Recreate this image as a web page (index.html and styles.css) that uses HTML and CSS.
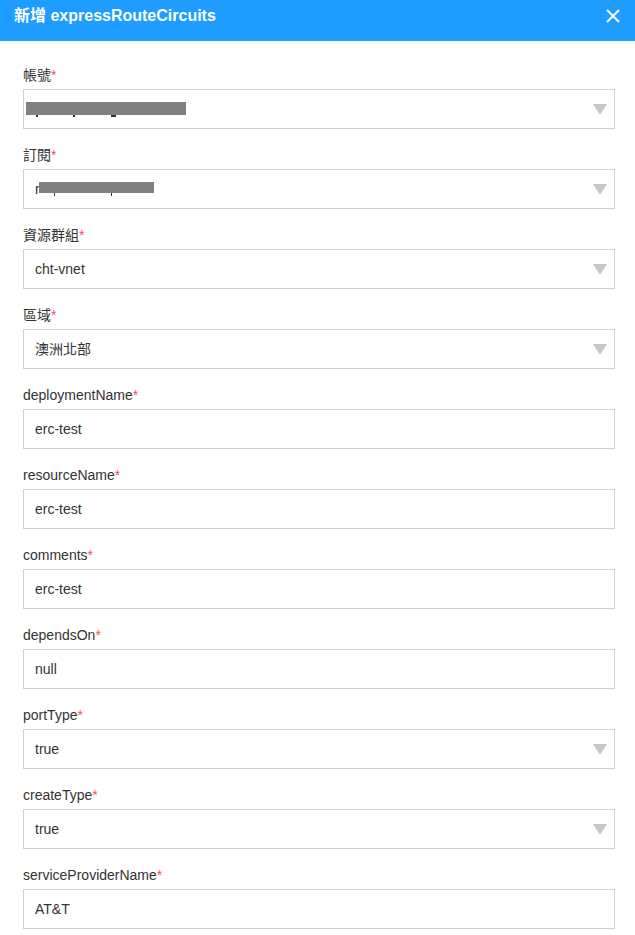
FILE: index.html
```html
<!DOCTYPE html>
<html lang="zh-Hant">
<head>
<meta charset="utf-8">
<title>新增 expressRouteCircuits</title>
<link rel="stylesheet" href="styles.css">
</head>
<body>
<div class="dialog">
  <header class="header">
    <h1 class="title">新增 expressRouteCircuits</h1>
    <button class="close" aria-label="close">
      <svg width="14" height="14" viewBox="0 0 14 14"><path d="M1 1 L13 13 M13 1 L1 13" stroke="#fff" stroke-width="2" fill="none"/></svg>
    </button>
  </header>
  <form class="form">
    <div class="field">
      <label class="label">帳號<span class="req">*</span></label>
      <div class="control select">
        <span class="value redacted-wrap"><span class="ghost">.</span><span class="redact r1"></span><span class="tick t1"></span><span class="tick t2"></span><span class="tick t3"></span></span>
        <span class="arrow"></span>
      </div>
    </div>
    <div class="field">
      <label class="label">訂閱<span class="req">*</span></label>
      <div class="control select">
        <span class="value redacted-wrap">r<span class="redact r2"></span><span class="tick t4"></span><span class="tick t5"></span></span>
        <span class="arrow"></span>
      </div>
    </div>
    <div class="field">
      <label class="label">資源群組<span class="req">*</span></label>
      <div class="control select"><span class="value">cht-vnet</span><span class="arrow"></span></div>
    </div>
    <div class="field">
      <label class="label">區域<span class="req">*</span></label>
      <div class="control select"><span class="value">澳洲北部</span><span class="arrow"></span></div>
    </div>
    <div class="field">
      <label class="label">deploymentName<span class="req">*</span></label>
      <div class="control"><span class="value">erc-test</span></div>
    </div>
    <div class="field">
      <label class="label">resourceName<span class="req">*</span></label>
      <div class="control"><span class="value">erc-test</span></div>
    </div>
    <div class="field">
      <label class="label">comments<span class="req">*</span></label>
      <div class="control"><span class="value">erc-test</span></div>
    </div>
    <div class="field">
      <label class="label">dependsOn<span class="req">*</span></label>
      <div class="control"><span class="value">null</span></div>
    </div>
    <div class="field">
      <label class="label">portType<span class="req">*</span></label>
      <div class="control select"><span class="value">true</span><span class="arrow"></span></div>
    </div>
    <div class="field">
      <label class="label">createType<span class="req">*</span></label>
      <div class="control select"><span class="value">true</span><span class="arrow"></span></div>
    </div>
    <div class="field">
      <label class="label">serviceProviderName<span class="req">*</span></label>
      <div class="control"><span class="value">AT&amp;T</span></div>
    </div>
  </form>
</div>
</body>
</html>
```
FILE: styles.css
```css
* { box-sizing: border-box; }
html, body {
  margin: 0;
  padding: 0;
  background: #fff;
}
body {
  font-family: "Liberation Sans", Arial, "Noto Sans CJK TC", sans-serif;
  font-size: 14px;
  color: #333;
}
.dialog {
  width: 635px;
}
.header {
  height: 41px;
  background: #1e9cff;
  display: flex;
  align-items: flex-start;
  justify-content: space-between;
  padding: 0 15px 0 14px;
}
.title {
  margin: 0;
  font-size: 16px;
  font-weight: bold;
  line-height: 31px;
  color: #fff;
}
.close {
  margin-top: 9px;
  width: 14px;
  height: 14px;
  padding: 0;
  border: 0;
  background: none;
  display: block;
  cursor: pointer;
}
.close svg { display: block; }
.form {
  padding: 25px 20px 0 23px;
  display: flex;
  flex-direction: column;
  gap: 17px;
}
.field {
  display: flex;
  flex-direction: column;
}
.label {
  display: block;
  line-height: 18px;
  height: 18px;
  margin-bottom: 5px;
  color: #333;
}
.req {
  color: #ff4d4f;
}
.control {
  height: 40px;
  border: 1px solid #cfcfcf;
  display: flex;
  align-items: center;
  padding: 0 7px 0 11px;
  background: #fff;
}
.value {
  flex: 1;
  line-height: 20px;
  color: #333;
}
.arrow {
  width: 0;
  height: 0;
  border-left: 7px solid transparent;
  border-right: 7px solid transparent;
  border-top: 11px solid #c8c8c8;
  margin-top: 1px;
}
.redacted-wrap {
  position: relative;
  height: 20px;
}
.ghost { color: transparent; }
.redact {
  position: absolute;
  background: #808080;
}
.r1 { left: -9px; top: 3px; width: 160px; height: 13px; }
.r2 { left: 4px; top: 3px; width: 115px; height: 11px; }
.tick {
  position: absolute;
  background: #333;
  width: 2px;
  height: 2px;
}
.t1 { left: 1px; top: 16px; }
.t2 { left: 38px; top: 16px; }
.t3 { left: 76px; top: 16px; width: 5px; height: 2px; }
.t4 { left: 19px; top: 14px; width: 1px; height: 3px; }
.t5 { left: 76px; top: 14px; width: 1px; height: 3px; }
```
